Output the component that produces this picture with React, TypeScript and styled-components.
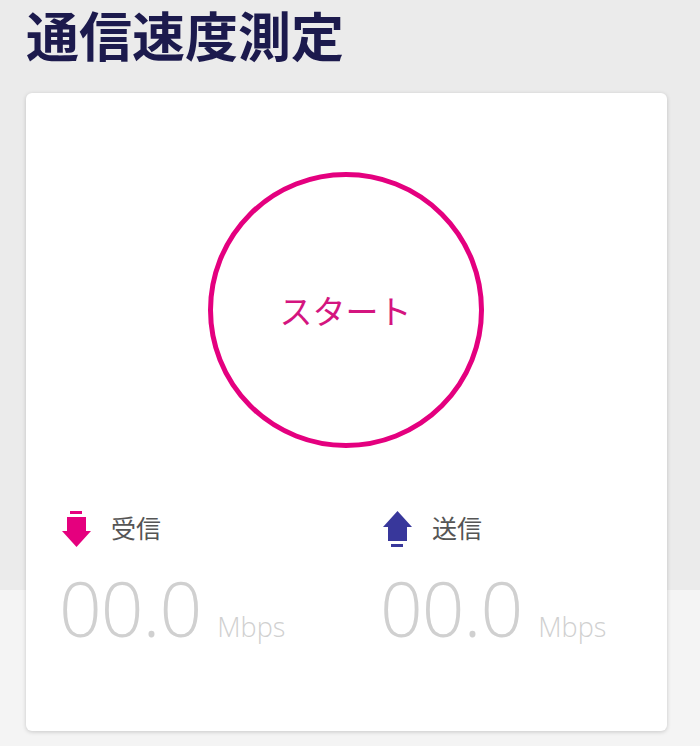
import styled, { createGlobalStyle } from 'styled-components';

const GlobalStyle = createGlobalStyle`
    html, body {
        margin: 0;
        padding: 0;
    }
    body {
        width: 700px;
        height: 746px;
        overflow: hidden;
        background: linear-gradient(to bottom, #ebebeb 0, #ebebeb 590px, #f4f4f4 590px);
        font-family: 'Noto Sans CJK JP', 'Noto Sans', sans-serif;
    }
`;

const Page = styled.div`
    display: flex;
    flex-direction: column;
    padding: 0 33px 0 26px;
`;

const Title = styled.h1`
    margin: 0 0 25px;
    padding: 0;
    font-size: 53px;
    line-height: 68px;
    font-weight: 700;
    color: #1c1a4d;
    white-space: nowrap;
`;

const Card = styled.div`
    display: flex;
    flex-direction: column;
    height: 638px;
    background: #ffffff;
    border-radius: 6px;
    box-shadow: 0 1px 4px rgba(0, 0, 0, 0.18);
    box-sizing: border-box;
    padding-top: 79px;
`;

const StartButton = styled.button`
    align-self: center;
    width: 276px;
    height: 276px;
    margin-left: -2px;
    border-radius: 50%;
    border: 5px solid #e4007f;
    background: transparent;
    color: #d4157f;
    font-family: 'Noto Sans CJK JP', sans-serif;
    font-size: 33px;
    cursor: pointer;
    padding: 0;
`;

const Stats = styled.div`
    display: grid;
    grid-template-columns: 321px 1fr;
    padding: 60px 0 0 36px;
`;

const Stat = styled.div`
    display: flex;
    flex-direction: column;
`;

const Label = styled.div`
    display: flex;
    align-items: center;
    gap: 19px;
    height: 40px;
    font-size: 25px;
    color: #555555;
    margin-top: -1px;

    svg {
        margin-top: 6px;
    }
`;

const Reading = styled.div`
    display: flex;
    align-items: baseline;
    gap: 16px;
    margin-top: 21px;
    font-family: 'Open Sans', 'Noto Sans', sans-serif;
    font-weight: 300;
    color: #d0d0d0;
`;

const Value = styled.span`
    font-size: 75px;
    line-height: 80px;
    letter-spacing: -1px;
    margin-left: -3px;
`;

const Unit = styled.span`
    font-size: 27px;
`;

const DownIcon = () => (
    <svg width="30" height="38" viewBox="0 0 30 38">
        <rect x="8" y="0" width="12" height="3" fill="#e5007e" />
        <path d="M5 6 H24 V20 H29 L14.5 36 L0 20 H5 Z" fill="#e5007e" />
    </svg>
);

const UpIcon = () => (
    <svg width="30" height="38" viewBox="0 0 30 38">
        <path d="M14.5 0 L29 16 H24 V30 H5 V16 H0 Z" fill="#38379b" />
        <rect x="8" y="33" width="12" height="3" fill="#38379b" />
    </svg>
);

const App = () => {
    return (
        <>
            <GlobalStyle />
            <Page>
                <Title>通信速度測定</Title>
                <Card>
                    <StartButton>スタート</StartButton>
                    <Stats>
                        <Stat>
                            <Label>
                                <DownIcon />
                                受信
                            </Label>
                            <Reading>
                                <Value>00.0</Value>
                                <Unit>Mbps</Unit>
                            </Reading>
                        </Stat>
                        <Stat>
                            <Label>
                                <UpIcon />
                                送信
                            </Label>
                            <Reading>
                                <Value>00.0</Value>
                                <Unit>Mbps</Unit>
                            </Reading>
                        </Stat>
                    </Stats>
                </Card>
            </Page>
        </>
    );
};

export default App;
